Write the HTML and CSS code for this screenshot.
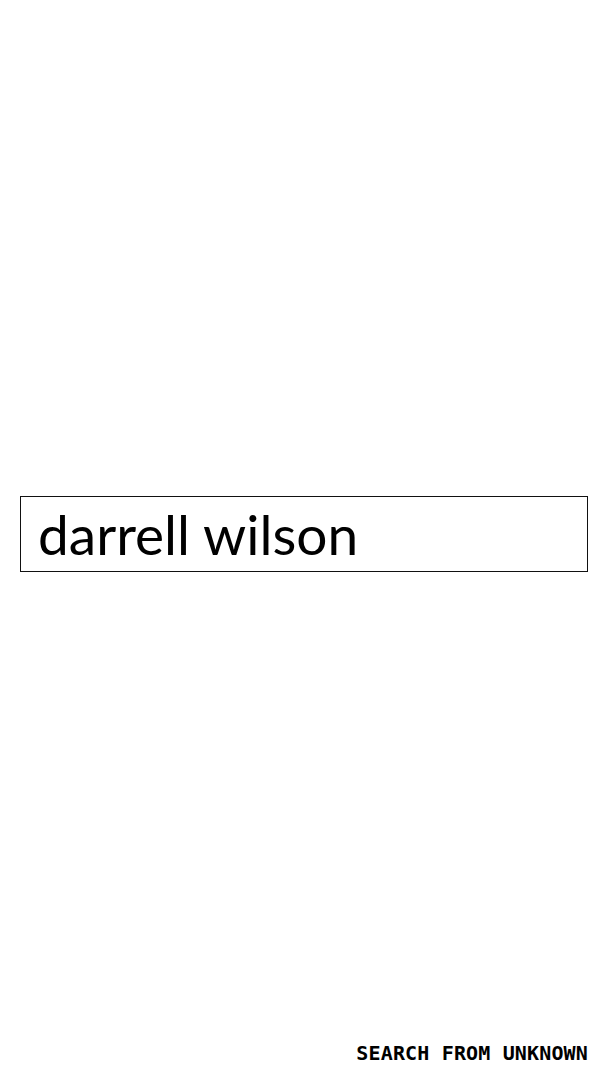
FILE: index.html
```html
<!DOCTYPE html>
<html lang="en">
<head>
<meta charset="utf-8">
<title>Search</title>
<link rel="stylesheet" href="styles.css">
</head>
<body>
<div class="page">
  <main class="main">
    <div class="search-box">darrell wilson</div>
  </main>
  <footer class="footer">SEARCH FROM UNKNOWN</footer>
</div>
</body>
</html>
```
FILE: styles.css
```css
html, body {
  margin: 0;
  padding: 0;
  background: #ffffff;
}
.page {
  display: flex;
  flex-direction: column;
  height: 1080px;
}
.main {
  flex: 1;
  display: flex;
  align-items: center;
  padding: 27px 20px 0;
}
.search-box {
  flex: 1;
  height: 74px;
  border: 1.5px solid #111;
  padding: 0 17px;
  font-family: Lato, "Noto Sans", sans-serif;
  font-size: 55px;
  line-height: 74px;
  color: #000;
  white-space: nowrap;
}
.footer {
  display: flex;
  justify-content: flex-end;
  padding: 0 20px 15px;
  font-family: "DejaVu Sans Mono", monospace;
  font-weight: bold;
  font-size: 20px;
  line-height: 24px;
  letter-spacing: 0.15px;
  color: #000;
}
```
